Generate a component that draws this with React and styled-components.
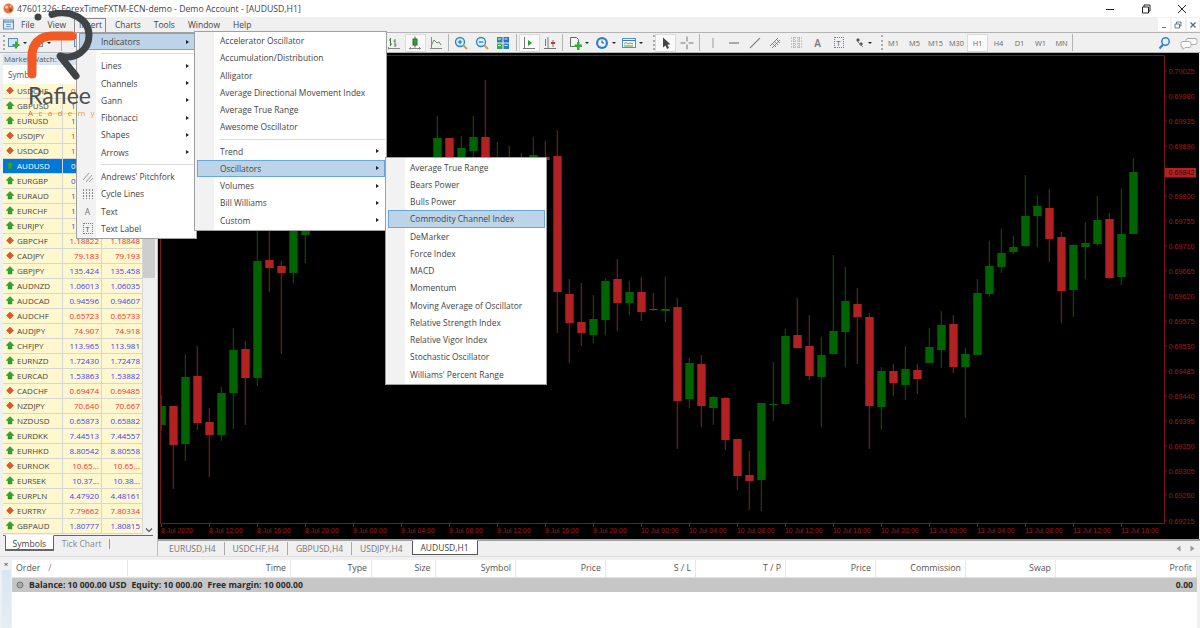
import React from "react";
import styled, { createGlobalStyle } from "styled-components";

const UI = `"Open Sans", "Noto Sans", sans-serif`;

const GlobalStyle = createGlobalStyle`
  html, body { margin: 0; padding: 0; background: #f0f0f0; }
  * { box-sizing: border-box; }
`;

const Page = styled.div`
  position: relative;
  width: 1200px;
  height: 628px;
  overflow: hidden;
  display: flex;
  flex-direction: column;
  background: #f0f0f0;
  font-family: ${UI};
  color: #333;
`;

/* title bar */
const TitleBar = styled.div`
  height: 17px;
  flex: none;
  display: flex;
  align-items: center;
  padding-left: 3px;
  gap: 3px;
  background: #fff;
  font-size: 8.7px;
  color: #444;
`;
const WindowButtons = styled.div`
  margin-left: auto;
  display: flex;
  align-items: center;
  height: 100%;
`;
const WindowButton = styled.div`
  width: 36px;
  height: 100%;
  display: flex;
  align-items: center;
  justify-content: center;
`;

/* menu bar */
const MenuBar = styled.div`
  height: 15px;
  flex: none;
  display: flex;
  align-items: center;
  padding-left: 3px;
  font-size: 8.5px;
  color: #444;
`;
const MenuItems = styled.div`
  display: flex;
  gap: 13px;
  margin-left: 7px;
`;
const OpenMenuItem = styled.span`
  position: relative;
  &::after {
    content: "";
    position: absolute;
    left: -5px;
    right: -4px;
    top: -1px;
    bottom: -2px;
    border: 1px solid #8a8a8a;
    border-bottom: 0;
  }
`;
const MdiButtons = styled.div`
  margin-left: auto;
  display: flex;
  gap: 2px;
  padding-right: 1px;
`;
const MdiButton = styled.div`
  width: 12.5px;
  height: 13px;
  background: #fff;
  display: flex;
  align-items: center;
  justify-content: center;
`;

/* toolbar */
const Toolbar = styled.div`
  height: 21px;
  flex: none;
  display: flex;
  align-items: center;
  border-top: 1px solid #b4b4b4;
  border-bottom: 1px solid #b4b4b4;
  font-size: 7.4px;
  color: #666;
`;
const ToolStart = styled.div`
  width: 383.5px;
  flex: none;
  display: flex;
  align-items: center;
  padding-left: 2px;
`;
const Grip = styled.div`
  width: ${p => p.$width || 3}px;
  height: 15px;
  flex: none;
  border-right: 2px dotted #aaa;
`;
const ToolButton = styled.div`
  width: ${p => p.$width || 21}px;
  height: 18px;
  flex: none;
  display: flex;
  align-items: center;
  justify-content: center;
  gap: 3px;
  background: ${p => (p.$on ? "#fafafa" : "transparent")};
  border: 1px solid ${p => (p.$on ? "#dadada" : "transparent")};
`;
const ToolSep = styled.div`
  width: ${p => p.$width || 4}px;
  height: 17px;
  flex: none;
  display: flex;
  justify-content: center;
  &::after {
    content: "";
    width: 1px;
    background: #b4b4b4;
  }
`;
const Caret = styled.span`
  width: 0;
  height: 0;
  border-left: 2px solid transparent;
  border-right: 2px solid transparent;
  border-top: 2.5px solid #222;
`;
const ToolEnd = styled.div`
  margin-left: auto;
  display: flex;
  gap: 3px;
  padding-right: 1px;
`;

/* workspace */
const Workspace = styled.div`
  height: 503px;
  flex: none;
  display: flex;
`;
const Sidebar = styled.div`
  width: 158px;
  flex: none;
  display: flex;
  flex-direction: column;
  padding: 1px 3px 0;
  border-right: 1px solid #bdbdbd;
  font-size: 8px;
`;
const PanelTitle = styled.div`
  height: 11px;
  line-height: 11px;
  flex: none;
  padding-left: 1px;
  background: #d9e4ee;
  color: #555;
  font-size: 7.8px;
`;
const WatchBody = styled.div`
  height: 470px;
  flex: none;
  display: flex;
`;
const WatchTable = styled.div`
  width: 140px;
  flex: none;
`;
const WatchHead = styled.div`
  height: 18.5px;
  display: flex;
  align-items: center;
  padding-left: 5px;
  background: #fff;
  color: #555;
  font-size: 8.2px;
`;
const WatchRow = styled.div`
  height: 15px;
  display: grid;
  grid-template-columns: 60px 39px 41px;
  align-items: center;
  background: ${p => (p.$selected ? "#0078d7" : "#fff8cf")};
  border-bottom: 1px solid #d6d6d2;
  color: ${p => (p.$selected ? "#fff" : "#444")};
`;
const SymbolCell = styled.div`
  display: flex;
  align-items: center;
  gap: 3px;
  padding-left: 3px;
  height: 100%;
  border-right: 1px solid #d6d6d2;
`;
const PriceCell = styled.div`
  height: 100%;
  line-height: 14px;
  text-align: ${p => (p.$cut ? "left" : "right")};
  padding: ${p => (p.$cut ? "0 0 0 8px" : "0 2px 0 0")};
  white-space: nowrap;
  overflow: hidden;
  border-right: 1px solid #d6d6d2;
  color: ${p => (p.$selected ? "#fff" : p.$up ? "#4141f5" : "#fa2f2f")};
`;
const Scrollbar = styled.div`
  width: 12px;
  flex: none;
  display: flex;
  flex-direction: column;
  align-items: center;
`;
const ScrollThumb = styled.div`
  width: 100%;
  height: 193px;
  margin-top: 20px;
  background: #cdcdcd;
`;
const ScrollDown = styled.div`
  margin-top: auto;
  margin-bottom: 2px;
  line-height: 0;
`;
const SideTabs = styled.div`
  display: flex;
  align-items: flex-start;
  height: 17px;
  flex: none;
  margin-right: 1px;
  border-top: 1px solid #666;
  font-size: 8.6px;
`;
const SideTab = styled.div`
  height: 100%;
  margin-top: -1px;
  padding: 1px 6.5px 0;
  line-height: 14px;
  margin-left: ${p => (p.$active ? "2px" : "0")};
  ${p =>
    p.$active
      ? `background: #fff; border: 1px solid #666; border-top-color: #fff; border-bottom-width: 2px; color: #444;`
      : `color: #888; padding: 2px 8px 0; `}
`;
const SideTabSep = styled.div`
  width: 1px;
  height: 10px;
  margin-top: 3px;
  background: #999;
`;

/* chart */
const ChartColumn = styled.div`
  flex: 1;
  display: flex;
  flex-direction: column;
  min-width: 0;
`;
const ChartArea = styled.svg`
  display: block;
  width: 1041px;
  height: 486px;
  flex: none;
  background: #000;
`;
const TabsStrip = styled.div`
  flex: 1;
  display: flex;
  align-items: flex-start;
  border-top: 2px solid #a2a2a2;
  padding-left: 3px;
  font-size: 8.5px;
  color: #777;
`;
const ChartTab = styled.div`
  height: 13px;
  line-height: 12px;
  display: flex;
  align-items: center;
  padding: 0 8px;
  border-right: 1px solid ${p => (p.$last ? "transparent" : "#aaa")};
  margin-top: 1px;
`;
const ActiveChartTab = styled.div`
  width: 66px;
  height: 15px;
  margin-top: -1px;
  display: flex;
  align-items: center;
  justify-content: center;
  background: #fff;
  border: 1px solid #555;
  border-top-color: #fff;
  color: #444;
`;
const TabArrows = styled.div`
  margin-left: auto;
  display: flex;
  gap: 9px;
  padding: 4px 5px 0 0;
`;

/* terminal */
const Terminal = styled.div`
  flex: 1;
  display: flex;
  padding-top: 3px;
  border-top: 1px solid #dedede;
`;
const TerminalSide = styled.div`
  width: 12px;
  flex: none;
  display: flex;
  flex-direction: column;
  align-items: center;
  gap: 2px;
  font-size: 8px;
  line-height: 8px;
  color: #333;
`;
const TerminalGrabber = styled.div`
  width: 9px;
  flex: 1;
  background: linear-gradient(#d6e6f2, #e6eef4);
`;
const TerminalBody = styled.div`
  flex: 1;
  margin-right: 3px;
  background: #fff;
  font-size: 8.8px;
`;
const COLUMNS = "116px 163px 81px 63.5px 80.5px 90px 90px 90px 90px 90px 90px 141px";
const HeadRow = styled.div`
  height: 18px;
  display: grid;
  grid-template-columns: ${COLUMNS};
  border-bottom: 1px solid #e2e2e2;
  color: #555;
`;
const HeadCell = styled.div`
  line-height: 17px;
  padding: 0 4px;
  text-align: ${p => (p.$left ? "left" : "right")};
  border-right: 1px solid #e8e8e8;
  white-space: nowrap;
`;
const SortMark = styled.span`
  margin-left: 8px;
  color: #888;
`;
const BalanceRow = styled.div`
  height: 14px;
  display: flex;
  align-items: center;
  padding: 0 4px;
  background: #c6c6c6;
  color: #2b2b2b;
  font-weight: 700;
  font-size: 8.6px;
`;
const BalanceParts = styled.div`
  display: flex;
  gap: 5px;
  margin-left: 5px;
`;
const BalanceProfit = styled.div`
  margin-left: auto;
`;

/* popup menus lie over the page */
const Menu = styled.div`
  position: absolute;
  left: ${p => p.$left}px;
  top: ${p => p.$top}px;
  width: ${p => p.$width}px;
  padding: 0.5px 1.5px 1.5px;
  border: 1px solid #a0a0a0;
  border-right-width: 1.5px;
  border-bottom-width: 1.5px;
  background: linear-gradient(90deg, #f2f2f2 ${p => p.$gutter}px, #fff ${p => p.$gutter}px);
  font-size: 8.45px;
  color: #444;
`;
const MenuRow = styled.div`
  height: 17.25px;
  display: flex;
  align-items: center;
  padding-left: ${p => p.$indent}px;
  white-space: nowrap;
  background: ${p => (p.$hot ? "#bdd4e8" : "transparent")};
  box-shadow: ${p => (p.$hot ? "inset 0 0 0 1px #66a7e0" : "none")};
`;
const MenuGlyph = styled.span`
  width: 17px;
  margin-left: -${p => p.$indent}px;
  margin-right: ${p => p.$indent - 17}px;
  padding-left: 1px;
  display: flex;
  justify-content: center;
  color: #777;
`;
const MenuArrow = styled.span`
  margin-left: auto;
  margin-right: 6px;
  width: 0;
  height: 0;
  border-top: 2.5px solid transparent;
  border-bottom: 2.5px solid transparent;
  border-left: 3px solid #222;
`;
const MenuSep = styled.div`
  height: 7.1px;
  margin-left: ${p => p.$indent}px;
  display: flex;
  align-items: center;
  &::after {
    content: "";
    flex: 1;
    height: 1px;
    background: #dcdcdc;
  }
`;

/* logo lies over the menus */
const Logo = styled.div`
  position: absolute;
  left: 26px;
  top: 10px;
  width: 72px;
  height: 110px;
`;
const LogoName = styled.div`
  position: absolute;
  left: 2px;
  top: 72px;
  font-size: 23px;
  line-height: 26px;
  font-family: "Lato", sans-serif;
  color: #4b4f52;
`;
const LogoSub = styled.div`
  position: absolute;
  left: 2px;
  top: 98px;
  font-size: 8px;
  line-height: 10px;
  letter-spacing: 5.4px;
  white-space: nowrap;
  background: linear-gradient(90deg, #f15a22, #f0a020);
  -webkit-background-clip: text;
  background-clip: text;
  color: transparent;
`;

// the rows under the Insert menu only show the first digit of the bid
const watch = [
  ["USDCHF", false, "0"],
  ["GBPUSD", true, "1"],
  ["EURUSD", true, "1"],
  ["USDJPY", false, "1"],
  ["USDCAD", false, "1"],
  ["AUDUSD", true, "0"],
  ["EURGBP", true, "0"],
  ["EURAUD", true, "1"],
  ["EURCHF", true, "1"],
  ["EURJPY", true, "1"],
  ["GBPCHF", false, "1.18822", "1.18848"],
  ["CADJPY", false, "79.183", "79.193"],
  ["GBPJPY", true, "135.424", "135.458"],
  ["AUDNZD", true, "1.06013", "1.06035"],
  ["AUDCAD", true, "0.94596", "0.94607"],
  ["AUDCHF", false, "0.65723", "0.65733"],
  ["AUDJPY", false, "74.907", "74.918"],
  ["CHFJPY", true, "113.965", "113.981"],
  ["EURNZD", true, "1.72430", "1.72478"],
  ["EURCAD", true, "1.53863", "1.53882"],
  ["CADCHF", false, "0.69474", "0.69485"],
  ["NZDJPY", false, "70.640", "70.667"],
  ["NZDUSD", true, "0.65873", "0.65882"],
  ["EURDKK", true, "7.44513", "7.44557"],
  ["EURHKD", true, "8.80542", "8.80558"],
  ["EURNOK", false, "10.65...", "10.65..."],
  ["EURSEK", true, "10.37...", "10.38..."],
  ["EURPLN", true, "4.47920", "4.48161"],
  ["EURTRY", false, "7.79662", "7.80334"],
  ["GBPAUD", true, "1.80777", "1.80815"]
];

// n, up, wick top, body top, body bottom, wick bottom
const candles = [
  [0, 1, 395, 406, 425, 431], [1, 0, 406, 406, 445, 489], [2, 1, 354, 377, 444, 461],
  [3, 0, 346, 376, 423, 430], [4, 0, 408, 422, 435, 477], [5, 1, 387, 393, 435, 441],
  [6, 1, 328, 350, 393, 429], [7, 0, 341, 349, 378, 425], [8, 1, 225, 261, 378, 386],
  [9, 0, 210, 260, 268, 292], [10, 0, 261, 266, 273, 354], [11, 1, 205, 215, 273, 283],
  [12, 1, 205, 215, 235, 263], [23, 1, 116, 138, 175, 190], [24, 0, 138, 138, 175, 190],
  [25, 1, 136, 148, 175, 190], [26, 1, 116, 137, 151, 170], [27, 0, 80, 137, 175, 190],
  [28, 1, 142, 165, 175, 190], [29, 0, 146, 165, 175, 190], [30, 1, 153, 165, 175, 190],
  [31, 1, 137, 155, 170, 190], [32, 0, 141, 157, 160, 175], [33, 0, 130, 156, 292, 333],
  [34, 0, 279, 294, 323, 363], [35, 0, 283, 322, 333, 346], [36, 1, 295, 319, 335, 343],
  [37, 1, 278, 281, 320, 335], [38, 0, 259, 279, 303, 331], [39, 1, 281, 292, 303, 315],
  [40, 0, 277, 292, 312, 321], [41, 0, 293, 309, 310, 311], [42, 1, 277, 309, 311, 322],
  [43, 0, 298, 307, 401, 449], [44, 1, 358, 363, 399, 408], [45, 0, 355, 364, 406, 427],
  [46, 1, 396, 397, 408, 425], [47, 0, 397, 398, 440, 450], [48, 0, 439, 439, 476, 490],
  [49, 0, 451, 475, 481, 510], [50, 1, 403, 403, 480, 511], [51, 1, 362, 404, 404.5, 421],
  [52, 1, 329, 336, 404, 405], [53, 0, 298, 335, 348, 349], [54, 0, 315, 346, 376, 380],
  [55, 1, 337, 355, 377, 427], [56, 1, 255, 331, 354, 354], [57, 1, 267, 301, 332, 367],
  [58, 0, 288, 304, 317, 364], [59, 0, 313, 317, 406, 449], [60, 1, 367, 371, 407, 430],
  [61, 0, 364, 371, 383, 396], [62, 1, 346, 369, 385, 400], [63, 0, 364, 370, 379, 394],
  [64, 1, 328, 347, 363, 363], [65, 1, 311, 325, 350, 368], [66, 0, 315, 324, 367, 373],
  [67, 1, 348, 354, 367, 418], [68, 1, 279, 293, 355, 355], [69, 1, 241, 266, 294, 297],
  [70, 1, 229, 253, 267, 273], [71, 1, 236, 247, 252, 254], [72, 1, 175, 216, 246, 247],
  [73, 1, 195, 206, 216, 247], [74, 0, 189, 208, 239, 262], [75, 0, 232, 237, 291, 323],
  [76, 1, 244, 245, 290, 317], [77, 1, 222, 243, 247, 279], [78, 1, 196, 220, 244, 246],
  [79, 0, 213, 219, 278, 279], [80, 1, 189, 234, 277, 285], [81, 1, 158, 172, 234, 234]
];

const priceLabels = [
  ["0.70025", 71], ["0.69980", 96], ["0.69935", 121], ["0.69890", 146], ["0.69800", 196],
  ["0.69755", 221], ["0.69710", 246], ["0.69665", 271], ["0.69620", 296], ["0.69575", 321],
  ["0.69530", 346], ["0.69485", 371], ["0.69440", 396], ["0.69395", 421], ["0.69350", 446],
  ["0.69305", 471], ["0.69260", 495], ["0.69215", 521]
];

const timeLabels = [
  "8 Jul 2020", "8 Jul 12:00", "8 Jul 16:00", "8 Jul 20:00", "9 Jul 00:00", "9 Jul 04:00", "9 Jul 08:00",
  "9 Jul 12:00", "9 Jul 16:00", "9 Jul 20:00", "10 Jul 00:00", "10 Jul 04:00", "10 Jul 08:00", "10 Jul 12:00",
  "10 Jul 16:00", "10 Jul 20:00", "13 Jul 00:00", "13 Jul 04:00", "13 Jul 08:00", "13 Jul 12:00", "13 Jul 16:00"
];

const AXIS = "#7d1414";
const LABEL = "#a01c1c";
const RED = "#b22222";
const GREEN = "#006400";

const Chart = () => (
  <ChartArea viewBox="158 53 1041 486">
    <defs>
      <clipPath id="plot">
        <rect x="161" y="56" width="1003" height="467" />
      </clipPath>
    </defs>
    <g clipPath="url(#plot)">
      {candles.map(([n, up, wt, bt, bb, wb]) => {
        const c = 161.3 + 12 * n;
        const color = up ? GREEN : RED;
        return (
          <g key={n}>
            <line x1={c} x2={c} y1={wt} y2={wb} stroke={up ? "#0a5a0a" : "#8c2020"} strokeWidth="1" />
            <rect x={c - 4} y={bt} width="8.4" height={Math.max(bb - bt, 1)} fill={color} />
          </g>
        );
      })}
    </g>
    <path d="M160.5 55.5H1164.5V523.5H160.5Z" fill="none" stroke={AXIS} strokeWidth="1" />
    {priceLabels.map(([text, y]) => (
      <g key={text}>
        <line x1="1164" x2="1167" y1={y} y2={y} stroke={AXIS} />
        <text x="1168.5" y={y + 2.6} fontSize="7.2" fontFamily="Liberation Sans, sans-serif" fill={LABEL}>
          {text}
        </text>
      </g>
    ))}
    <rect x="1165" y="168" width="31" height="9.5" fill="#b22222" />
    <text x="1168.5" y="175.4" fontSize="7.2" fontFamily="Liberation Sans, sans-serif" fill="#3a0a0a">
      0.69842
    </text>
    {timeLabels.map((text, i) => {
      const x = 161 + 48 * i;
      return (
        <g key={text}>
          <line x1={x + 0.5} x2={x + 0.5} y1="523" y2="527" stroke={AXIS} />
          <text x={x} y="533.3" fontSize="6.9" fontFamily="Liberation Sans, sans-serif" fill={LABEL}>
            {text}
          </text>
        </g>
      );
    })}
  </ChartArea>
);

const Icon = ({ w = 14, h = 14, children }) => (
  <svg width={w} height={h} viewBox={`0 0 ${w} ${h}`} fill="none">
    {children}
  </svg>
);

const AppIcon = () => (
  <Icon w={11} h={11}>
    <circle cx="5.5" cy="5.5" r="5" fill="#e8703a" />
    <circle cx="3.5" cy="4" r="1.6" fill="#f6d2b6" />
    <circle cx="7.5" cy="7" r="1.7" fill="#b8402a" />
    <circle cx="7.5" cy="3" r="1" fill="#f3b07e" />
  </Icon>
);

const NewChartIcon = () => (
  <Icon w={12} h={12}>
    <rect x="0.5" y="1.5" width="9" height="8" fill="#d3e6f5" stroke="#5a8fc0" />
    <path d="M6 7h2.5V4.5h2V7H13v2h-2.5v2.5h-2V9H6z" fill="#35b035" transform="translate(-1.5 0)" />
  </Icon>
);
const ProfilesIcon = () => (
  <Icon w={12} h={12}>
    <rect x="1.5" y="2.5" width="9" height="7" fill="#d3e6f5" stroke="#6a8fb0" />
    <path d="M1.5 5h9" stroke="#6a8fb0" />
  </Icon>
);
const BarsIcon = () => (
  <Icon>
    <path d="M3.5 2v8M3.5 4H2M3.5 8H5M8 3v8M8 5H6.5M8 9h1.5" stroke="#4a7a4a" />
    <path d="M1 12.5h12M1.5 11v2.5" stroke="#888" />
  </Icon>
);
const CandleIcon = () => (
  <Icon>
    <path d="M7 0.5v11" stroke="#555" />
    <rect x="5" y="3" width="4" height="6" fill="#35a035" stroke="#2a6a2a" />
    <path d="M1 12.5h12M2.5 11v2.5M11.5 11v2.5" stroke="#888" />
  </Icon>
);
const LineIcon = () => (
  <Icon>
    <path d="M2 10 5 4l3 3 2-1 2 3" stroke="#6f8a6f" />
    <path d="M1 12.5h12M2.5 1v12" stroke="#888" />
  </Icon>
);
const ZoomIcon = ({ plus }) => (
  <Icon>
    <circle cx="6" cy="6" r="4.5" fill="#d8f0fb" stroke="#2a86c8" strokeWidth="1.3" />
    <path d="M9.5 9.5 13 13" stroke="#d0a050" strokeWidth="2" />
    <path d={plus ? "M3.8 6h4.4M6 3.8v4.4" : "M3.8 6h4.4"} stroke="#2a70b0" strokeWidth="1.2" />
  </Icon>
);
const TileIcon = () => (
  <Icon>
    <rect x="1" y="1" width="5.5" height="5.5" fill="#2a8a9a" />
    <rect x="7.5" y="1" width="5.5" height="5.5" fill="#2a6fc0" />
    <rect x="1" y="7.5" width="5.5" height="5.5" fill="#3aa85a" />
    <rect x="7.5" y="7.5" width="5.5" height="5.5" fill="#2a7fd0" />
    <path d="M2 3h3M8.5 3h3M2 9.5h3M8.5 9.5h3" stroke="#e8f4fa" />
  </Icon>
);
const AutoScrollIcon = () => (
  <Icon>
    <path d="M1 12.5h12M2.5 1v12" stroke="#777" />
    <path d="M6 4v6l4-3z" fill="#2ca02c" />
  </Icon>
);
const ShiftIcon = () => (
  <Icon>
    <path d="M1 12.5h12M5 1v12" stroke="#777" />
    <path d="M2.5 3v7M10 4v7" stroke="#777" />
    <path d="M8 6h4v2H8z" fill="#d03030" />
  </Icon>
);
const TemplateIcon = () => (
  <Icon>
    <path d="M2.5 1.5h6l2 2v7h-8z" fill="#f4f4f4" stroke="#666" />
    <path d="M6.5 8.5h2.5V6h2.5v2.5H14V11h-2.5v3H9v-3H6.5z" fill="#30b030" />
  </Icon>
);
const ClockIcon = () => (
  <Icon>
    <circle cx="7" cy="7" r="6" fill="#2f7fcf" />
    <circle cx="7" cy="7" r="3.8" fill="#eef6fc" />
    <path d="M7 4.5V7h2" stroke="#1c4f80" />
  </Icon>
);
const TemplatesIcon = () => (
  <Icon>
    <rect x="0.5" y="2.5" width="13" height="9" fill="#f4f8fb" stroke="#5a8fc0" />
    <path d="M0.5 4.5h13" stroke="#2f7fcf" />
    <path d="M2 8l2-1.5L6 8l2-1 3 1" stroke="#d08030" />
    <path d="M2 10h9" stroke="#40a040" />
  </Icon>
);
const CursorIcon = () => (
  <Icon>
    <path d="M4 1.5v10l2.5-2 1.5 3.5 2-1-1.6-3.3 3-.4z" fill="#444" />
  </Icon>
);
const CrossIcon = () => (
  <Icon>
    <path d="M7 0.5v5M7 8.5v5M0.5 7h5M8.5 7h5" stroke="#777" />
  </Icon>
);
const VLineIcon = () => (
  <Icon>
    <path d="M7 2v10" stroke="#aaa" strokeWidth="1.2" />
  </Icon>
);
const HLineIcon = () => (
  <Icon>
    <path d="M2 7h10" stroke="#777" strokeWidth="1.2" />
  </Icon>
);
const TrendIcon = () => (
  <Icon>
    <path d="M2 12 12 2" stroke="#888" strokeWidth="1.1" />
  </Icon>
);
const ChannelIcon = () => (
  <Icon>
    <path d="M1 10 9 2M3 12l8-8M5 5l4 4M3 7l4 4M7 3l4 4" stroke="#777" strokeWidth="0.9" />
  </Icon>
);
const FiboIcon = () => (
  <Icon>
    <path d="M1 2h12M1 5h12M1 8h12M1 11h12M4 1v11M9 1v11" stroke="#999" strokeDasharray="1 1" />
  </Icon>
);
const LabelBox = styled.span`
  width: 10px;
  height: 11px;
  border: 1px dotted #777;
  display: flex;
  align-items: center;
  justify-content: center;
  font-size: 8px;
  color: #555;
`;
const TextTool = styled.span`
  font-size: 10px;
  font-weight: 600;
  color: #777;
`;
const ArrowsIcon = () => (
  <Icon w={11} h={12}>
    <path d="M2 3 4 1l2 2-2 2zM5 7l2-2 2 2-2 2z" fill="#555" />
    <path d="M3 4l6 6" stroke="#777" />
  </Icon>
);
const SearchIcon = () => (
  <Icon w={13} h={14}>
    <circle cx="7.5" cy="5.5" r="3.7" stroke="#2a86d8" strokeWidth="1.5" />
    <path d="M5 8.5 1.5 12.5" stroke="#2a86d8" strokeWidth="2" />
  </Icon>
);
const ChatIcon = () => (
  <Icon w={18} h={14}>
    <path d="M8 2.5h7a2 2 0 0 1 2 2v2a2 2 0 0 1-2 2h-5l-2 2v-2a2 2 0 0 1-2-2v-2a2 2 0 0 1 2-2z" fill="#fafafa" stroke="#aaa" />
    <path d="M3 5.5h6a2 2 0 0 1 2 2v2a2 2 0 0 1-2 2H5l-2 2v-2a2 2 0 0 1-2-2v-2a2 2 0 0 1 2-2z" fill="#fff" stroke="#aaa" />
  </Icon>
);

const TrendArrow = ({ up }) => (
  <Icon w={8} h={9}>
    {up ? (
      <path d="M4 0.5 8 4.5H6V8H2V4.5H0z" fill="#2fa52f" stroke="#1f7a1f" strokeWidth="0.4" />
    ) : (
      <path d="M4 8 7.5 4.5 4 1 0.5 4.5z" fill="#e0552a" stroke="#a83a1a" strokeWidth="0.4" />
    )}
  </Icon>
);

const PeriodButtons = ["M1", "M5", "M15", "M30", "H1", "H4", "D1", "W1", "MN"];

const insertItems = [
  { label: "Indicators", arrow: true, hot: true },
  "sep",
  { label: "Lines", arrow: true },
  { label: "Channels", arrow: true },
  { label: "Gann", arrow: true },
  { label: "Fibonacci", arrow: true },
  { label: "Shapes", arrow: true },
  { label: "Arrows", arrow: true },
  "sep",
  { label: "Andrews' Pitchfork", glyph: "pitch" },
  { label: "Cycle Lines", glyph: "cycle" },
  { label: "Text", glyph: "A" },
  { label: "Text Label", glyph: "T" }
];
const indicatorItems = [
  { label: "Accelerator Oscillator" },
  { label: "Accumulation/Distribution" },
  { label: "Alligator" },
  { label: "Average Directional Movement Index" },
  { label: "Average True Range" },
  { label: "Awesome Oscillator" },
  "sep",
  { label: "Trend", arrow: true },
  { label: "Oscillators", arrow: true, hot: true },
  { label: "Volumes", arrow: true },
  { label: "Bill Williams", arrow: true },
  { label: "Custom", arrow: true }
];
const oscillatorItems = [
  { label: "Average True Range" },
  { label: "Bears Power" },
  { label: "Bulls Power" },
  { label: "Commodity Channel Index", hot: true },
  { label: "DeMarker" },
  { label: "Force Index" },
  { label: "MACD" },
  { label: "Momentum" },
  { label: "Moving Average of Oscillator" },
  { label: "Relative Strength Index" },
  { label: "Relative Vigor Index" },
  { label: "Stochastic Oscillator" },
  { label: "Williams' Percent Range" }
];

const glyphs = {
  pitch: (
    <Icon w={12} h={12}>
      <path d="M1 9 7 2M4 11l6-7M7 11l4-4" stroke="#999" />
    </Icon>
  ),
  cycle: (
    <Icon w={12} h={12}>
      <path d="M1.5 1v10M4.5 1v10M7.5 1v10M10.5 1v10" stroke="#888" strokeDasharray="2 1" />
    </Icon>
  ),
  A: <span>A</span>,
  T: <LabelBox>T</LabelBox>
};

const PopupMenu = ({ items, left, top, width, gutter, indent }) => (
  <Menu $left={left} $top={top} $width={width} $gutter={gutter}>
    {items.map((item, i) =>
      item === "sep" ? (
        <MenuSep key={i} $indent={indent} />
      ) : (
        <MenuRow key={item.label} $indent={indent} $hot={item.hot}>
          {item.glyph && <MenuGlyph $indent={indent}>{glyphs[item.glyph]}</MenuGlyph>}
          {item.label}
          {item.arrow && <MenuArrow />}
        </MenuRow>
      )
    )}
  </Menu>
);

const WatchList = () => (
  <WatchTable>
    <WatchHead>Symbol</WatchHead>
    {watch.map(([symbol, up, bid, ask]) => {
      const selected = symbol === "AUDUSD";
      return (
        <WatchRow key={symbol} $selected={selected}>
          <SymbolCell>
            <TrendArrow up={up} />
            {symbol}
          </SymbolCell>
          <PriceCell $up={up} $selected={selected} $cut={!ask}>{bid}</PriceCell>
          <PriceCell $up={up} $selected={selected}>{ask}</PriceCell>
        </WatchRow>
      );
    })}
  </WatchTable>
);

const App = () => (
  <Page>
    <GlobalStyle />
    <TitleBar>
      <AppIcon />
      <span>47601326: ForexTimeFXTM-ECN-demo - Demo Account - [AUDUSD,H1]</span>
      <WindowButtons>
        <WindowButton>
          <Icon w={10} h={10}><path d="M1 5.5h8" stroke="#222" /></Icon>
        </WindowButton>
        <WindowButton>
          <Icon w={10} h={10}><path d="M1.5 3h6v6h-6zM3 3V1h6v6H7.5" stroke="#222" /></Icon>
        </WindowButton>
        <WindowButton>
          <Icon w={10} h={10}><path d="M1 1l8 8M9 1 1 9" stroke="#222" /></Icon>
        </WindowButton>
      </WindowButtons>
    </TitleBar>

    <MenuBar>
      <Icon w={11} h={11}>
        <rect x="0.5" y="1" width="10" height="9" fill="#dceaf6" stroke="#5a90c0" />
        <path d="M0.5 3h10" stroke="#3a78b0" />
        <path d="M3 5.5h5M3 7.5h5" stroke="#80a0c0" />
      </Icon>
      <MenuItems>
        <span>File</span>
        <span>View</span>
        <OpenMenuItem>Insert</OpenMenuItem>
        <span>Charts</span>
        <span>Tools</span>
        <span>Window</span>
        <span>Help</span>
      </MenuItems>
      <MdiButtons>
        <MdiButton><Icon w={8} h={8}><path d="M2 6.5h4" stroke="#777" /></Icon></MdiButton>
        <MdiButton><Icon w={8} h={8}><path d="M1 3h4.5v4H1zM2.5 3V1H7v4H5.5" stroke="#6a7a8a" /></Icon></MdiButton>
        <MdiButton><Icon w={8} h={8}><path d="M1.5 1.5l5 5M6.5 1.5l-5 5" stroke="#5a6a7a" strokeWidth="1.2" /></Icon></MdiButton>
      </MdiButtons>
    </MenuBar>

    <Toolbar>
      <ToolStart>
        <Grip />
        <ToolButton $width={24}><NewChartIcon /><Caret /></ToolButton>
        <ToolButton $width={24}><ProfilesIcon /><Caret /></ToolButton>
        <ToolSep $width={16} />
        <ToolButton><NewChartIcon /></ToolButton>
      </ToolStart>
      <ToolButton><BarsIcon /></ToolButton>
      <ToolButton $on><CandleIcon /></ToolButton>
      <ToolButton><LineIcon /></ToolButton>
      <ToolSep />
      <ToolButton><ZoomIcon plus /></ToolButton>
      <ToolButton><ZoomIcon /></ToolButton>
      <ToolButton><TileIcon /></ToolButton>
      <ToolSep $width={5} />
      <ToolButton $on><AutoScrollIcon /></ToolButton>
      <ToolButton><ShiftIcon /></ToolButton>
      <ToolSep />
      <ToolButton $width={27.5}><TemplateIcon /><Caret /></ToolButton>
      <ToolButton $width={27}><ClockIcon /><Caret /></ToolButton>
      <ToolButton $width={27}><TemplatesIcon /><Caret /></ToolButton>
      <Grip $width={9} />
      <ToolButton $on><CursorIcon /></ToolButton>
      <ToolButton><CrossIcon /></ToolButton>
      <ToolSep $width={5} />
      <ToolButton><VLineIcon /></ToolButton>
      <ToolButton><HLineIcon /></ToolButton>
      <ToolButton><TrendIcon /></ToolButton>
      <ToolButton><ChannelIcon /></ToolButton>
      <ToolButton><FiboIcon /></ToolButton>
      <ToolButton><TextTool>A</TextTool></ToolButton>
      <ToolButton><LabelBox>T</LabelBox></ToolButton>
      <ToolButton $width={27}><ArrowsIcon /><Caret /></ToolButton>
      <Grip $width={7} />
      {PeriodButtons.map(p => (
        <ToolButton key={p} $on={p === "H1"}>{p}</ToolButton>
      ))}
      <ToolSep $width={1} />
      <ToolEnd>
        <ToolButton><SearchIcon /></ToolButton>
        <ToolButton><ChatIcon /></ToolButton>
      </ToolEnd>
    </Toolbar>

    <Workspace>
      <Sidebar>
        <PanelTitle>Market Watch:</PanelTitle>
        <WatchBody>
          <WatchList />
          <Scrollbar>
            <ScrollThumb />
            <ScrollDown>
              <Icon w={8} h={6}><path d="M1 1.5 4 4.5 7 1.5" stroke="#555" strokeWidth="1.2" /></Icon>
            </ScrollDown>
          </Scrollbar>
        </WatchBody>
        <SideTabs>
          <SideTab $active>Symbols</SideTab>
          <SideTab>Tick Chart</SideTab>
          <SideTabSep />
        </SideTabs>
      </Sidebar>

      <ChartColumn>
        <Chart />
        <TabsStrip>
          <ChartTab>EURUSD,H4</ChartTab>
          <ChartTab>USDCHF,H4</ChartTab>
          <ChartTab>GBPUSD,H4</ChartTab>
          <ChartTab $last>USDJPY,H4</ChartTab>
          <ActiveChartTab>AUDUSD,H1</ActiveChartTab>
          <TabArrows>
            <Icon w={5} h={7}><path d="M4.5 0.5v6L0.5 3.5z" fill="#999" /></Icon>
            <Icon w={5} h={7}><path d="M0.5 0.5v6l4-3z" fill="#999" /></Icon>
          </TabArrows>
        </TabsStrip>
      </ChartColumn>
    </Workspace>

    <Terminal>
      <TerminalSide>
        <span>×</span>
        <TerminalGrabber />
      </TerminalSide>
      <TerminalBody>
        <HeadRow>
          <HeadCell $left>Order<SortMark>/</SortMark></HeadCell>
          <HeadCell>Time</HeadCell>
          <HeadCell>Type</HeadCell>
          <HeadCell>Size</HeadCell>
          <HeadCell>Symbol</HeadCell>
          <HeadCell>Price</HeadCell>
          <HeadCell>S / L</HeadCell>
          <HeadCell>T / P</HeadCell>
          <HeadCell>Price</HeadCell>
          <HeadCell>Commission</HeadCell>
          <HeadCell>Swap</HeadCell>
          <HeadCell>Profit</HeadCell>
        </HeadRow>
        <BalanceRow>
          <Icon w={8} h={8}>
            <circle cx="4" cy="4" r="3" fill="#a8a8a8" stroke="#777" />
          </Icon>
          <BalanceParts>
            <span>Balance: 10 000.00 USD</span>
            <span>Equity: 10 000.00</span>
            <span>Free margin: 10 000.00</span>
          </BalanceParts>
          <BalanceProfit>0.00</BalanceProfit>
        </BalanceRow>
      </TerminalBody>
    </Terminal>

    <PopupMenu items={insertItems} left={76} top={31.5} width={121} gutter={19} indent={22.5} />
    <PopupMenu items={indicatorItems} left={194} top={30.5} width={193} gutter={19} indent={23.5} />
    <PopupMenu items={oscillatorItems} left={385} top={157} width={162} gutter={19} indent={22.5} />

    <Logo>
      <svg width="72" height="72" viewBox="0 0 72 72" fill="none">
        <circle cx="12" cy="7" r="3.5" fill="#3f4447" />
        <path d="M26 4.5C44 -1 63 9 63 25C63 40 50 50 34 46L50 66" stroke="#3f4447" strokeWidth="7" strokeLinecap="round" strokeLinejoin="round" />
        <path d="M46 26H26C14 26 6 34 6 46V64" stroke="#f15a22" strokeWidth="9" strokeLinecap="round" />
      </svg>
      <LogoName>Rafiee</LogoName>
      <LogoSub>Academy</LogoSub>
    </Logo>
  </Page>
);

export default App;
